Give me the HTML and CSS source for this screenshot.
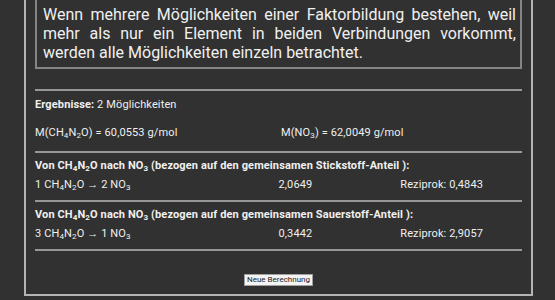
FILE: index.html
```html
<!DOCTYPE html>
<html lang="de">
<head>
    <meta charset="UTF-8">
    <meta name="viewport" content="width=device-width, initial-scale=1.0">
    <title>Faktorbildung</title>
    <link rel="stylesheet" href="styles.css">
</head>
<body>
    <div class="panel">
        <div class="info-box">
            <p>Wenn mehrere Möglichkeiten einer Faktorbildung bestehen, weil mehr als nur ein Element in beiden Verbindungen vorkommt, werden alle Möglichkeiten einzeln betrachtet.</p>
        </div>

        <hr class="divider first">
        <div class="summary">
            <p class="count"><strong>Ergebnisse:</strong> 2 Möglichkeiten</p>
            <div class="row">
                <span class="col-main">M(CH<sub>4</sub>N<sub>2</sub>O) = 60,0553 g/mol</span>
                <span class="col-wide">M(NO<sub>3</sub>) = 62,0049 g/mol</span>
            </div>
        </div>

        <hr class="divider">
        <div class="result">
            <div class="row head"><strong>Von CH<sub>4</sub>N<sub>2</sub>O nach NO<sub>3</sub> (bezogen auf den gemeinsamen Stickstoff-Anteil ):</strong></div>
            <div class="row">
                <span class="col-main">1 CH<sub>4</sub>N<sub>2</sub>O &rarr; 2 NO<sub>3</sub></span>
                <span class="col">2,0649</span>
                <span class="col">Reziprok: 0,4843</span>
            </div>
        </div>

        <hr class="divider">
        <div class="result">
            <div class="row head"><strong>Von CH<sub>4</sub>N<sub>2</sub>O nach NO<sub>3</sub> (bezogen auf den gemeinsamen Sauerstoff-Anteil ):</strong></div>
            <div class="row">
                <span class="col-main">3 CH<sub>4</sub>N<sub>2</sub>O &rarr; 1 NO<sub>3</sub></span>
                <span class="col">0,3442</span>
                <span class="col">Reziprok: 2,9057</span>
            </div>
        </div>

        <hr class="divider">
        <div class="actions">
            <button type="button" class="btn">Neue Berechnung</button>
        </div>
    </div>
</body>
</html>
```

FILE: styles.css
```css
body {
    margin: 0;
    background-color: #313131;
    color: #f0f0f0;
    font-family: Roboto, "Liberation Sans", sans-serif;
}
.panel {
    box-sizing: border-box;
    width: 509px;
    margin: -24px 0 0 24px;
    padding: 9px 9px 0 9px;
    border: 2px solid #b4b4b4;
}
.info-box {
    border: 2px solid #858585;
    padding: 16px 4px 5px 6px;
}
.info-box p {
    margin: 0;
    font-size: 16px;
    line-height: 19px;
    text-align: justify;
}
.divider {
    margin: 0;
    border: 0;
    border-top: 2px solid #979797;
}
.divider.first {
    margin-top: 20px;
}
.summary,
.result {
    font-size: 11px;
    letter-spacing: 0.12px;
}
.summary {
    padding: 4px 0 9px;
}
.count {
    margin: 0 0 9px;
    line-height: 19px;
}
.result {
    padding: 3px 0 6px;
}
.row {
    display: flex;
    line-height: 19px;
    height: 19px;
    white-space: nowrap;
}
.col-main {
    width: 246px;
}
.col {
    width: 123px;
}
.col-wide {
    width: 241px;
}
sub {
    font-size: 8px;
    line-height: 0;
    vertical-align: -2px;
}
.actions {
    display: flex;
    justify-content: center;
    padding: 23px 0 8px;
}
.btn {
    font-family: Roboto, "Liberation Sans", sans-serif;
    font-size: 8px;
    height: 12px;
    line-height: 10px;
    padding: 0 2px;
    color: #222;
    background-color: #f4f4f4;
    border: 1px solid #a0a0a0;
    border-radius: 0;
}
```
